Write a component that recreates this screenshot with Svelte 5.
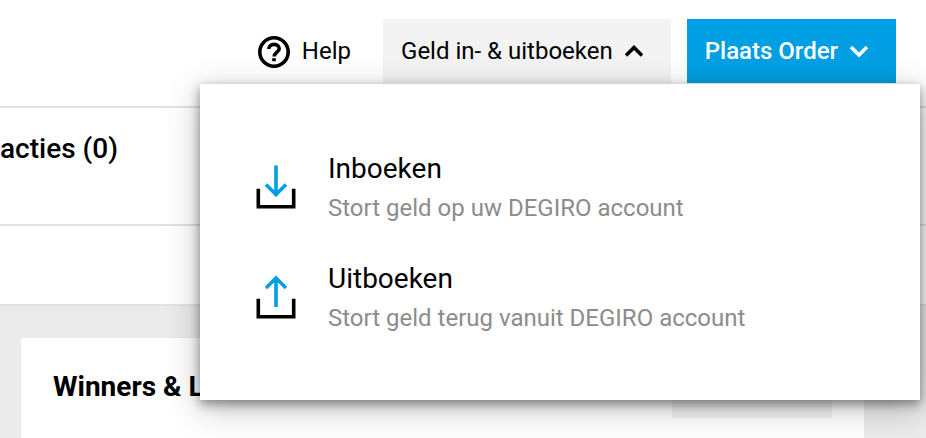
<script>
  let menuOpen = $state(true);

  const options = [
    {
      title: "Inboeken",
      text: "Stort geld op uw DEGIRO account",
      arrow: "M20 0.5V31M10 19.5L20 29.5L30 19.5",
    },
    {
      title: "Uitboeken",
      text: "Stort geld terug vanuit DEGIRO account",
      arrow: "M20 32V3M10 13L20 3L30 13",
    },
  ];

  function toggleMenu() {
    menuOpen = !menuOpen;
  }
</script>

<div class="page">
  <header>
    <div class="actions">
      <a class="help" href="#help">
        <svg width="32" height="34" viewBox="0 -2 32 34" aria-hidden="true">
          <circle cx="16" cy="16" r="14.2" />
          <path
            d="M10.8 13C10.8 10 13 8.4 16 8.4S21.2 10.2 21.2 12.8C21.2 16 16.2 16.6 16.2 20.6"
          />
          <path d="M16 22.2V25.2" />
        </svg>
        Help
      </a>
      <button class="cash" aria-expanded={menuOpen} onclick={toggleMenu}>
        Geld in- &amp; uitboeken
        <svg width="18" height="12" viewBox="0 0 18 12" aria-hidden="true">
          <path d={menuOpen ? "M1 10.5L9 2.5L17 10.5" : "M1 2.5L9 10.5L17 2.5"} />
        </svg>
      </button>
      <button class="order">
        Plaats Order
        <svg width="18" height="12" viewBox="0 0 18 12" aria-hidden="true">
          <path d="M1 2L9 10L17 2" />
        </svg>
      </button>

      {#if menuOpen}
        <div class="menu">
          {#each options as option}
            <a class="option" href="#{option.title.toLowerCase()}">
              <svg width="40" height="44" viewBox="0 0 40 44" aria-hidden="true">
                <path class="tray" d="M2.3 23.7V41.8H37.7V23.7" />
                <path class="arrow" d={option.arrow} />
              </svg>
              <span class="label">
                <span class="title">{option.title}</span>
                <span class="text">{option.text}</span>
              </span>
            </a>
          {/each}
        </div>
      {/if}
    </div>
  </header>

  <nav>
    <a href="#transacties">acties (0)</a>
  </nav>

  <div class="toolbar"></div>

  <main>
    <section class="card">
      <h2>Winners &amp; Losers</h2>
      <div class="filter"></div>
    </section>
  </main>
</div>

<style>
  :global(body) {
    margin: 0;
    overflow: hidden;
  }

  .page {
    display: flex;
    flex-direction: column;
    min-height: 100vh;
    background: #fff;
    color: #000;
    font-family: Roboto, sans-serif;
  }

  header,
  nav,
  .toolbar {
    border-bottom: 2px solid #e1e1e1;
  }

  header {
    padding: 19px 30px 23px;
  }

  .actions {
    position: relative;
    display: flex;
    justify-content: flex-end;
    gap: 16px;
  }

  a {
    color: inherit;
    text-decoration: none;
  }

  button,
  .help {
    display: flex;
    align-items: center;
    gap: 12px;
    height: 64px;
    font-family: inherit;
    font-size: 24px;
    line-height: 32px;
    white-space: nowrap;
  }

  .help {
    padding-right: 16px;
  }

  button {
    padding: 0 28px 0 18px;
    border: none;
    color: #000;
    cursor: pointer;
  }

  svg {
    flex: none;
    fill: none;
    stroke: currentColor;
    stroke-width: 3.6;
  }

  .cash {
    background: #f3f3f3;
  }

  .order {
    background: #009fe3;
    color: #fff;
    font-weight: 500;
  }

  .menu {
    position: absolute;
    z-index: 1;
    top: 65px;
    right: -24px;
    display: flex;
    flex-direction: column;
    gap: 32px;
    box-sizing: border-box;
    width: 720px;
    padding: 64px 56px;
    background: #fff;
    box-shadow:
      0 4px 10px rgba(0, 0, 0, 0.4),
      0 8px 32px rgba(0, 0, 0, 0.25);
  }

  .option {
    display: flex;
    align-items: center;
    gap: 32px;
  }

  .label {
    display: flex;
    flex-direction: column;
  }

  .title {
    font-size: 28px;
    line-height: 42px;
  }

  .text {
    color: #8c8c8c;
    font-size: 24px;
    line-height: 36px;
  }

  .arrow {
    stroke: #009fe3;
  }

  nav {
    padding: 20px 0 54px;
    font-size: 28px;
    font-weight: 500;
    line-height: 42px;
  }

  .toolbar {
    height: 78px;
  }

  main {
    flex: 1;
    padding: 32px 62px 0 21px;
    background: #ebebeb;
  }

  .card {
    display: flex;
    align-items: flex-start;
    justify-content: space-between;
    padding: 16px 32px 20px;
    background: #fff;
  }

  h2 {
    margin: 0;
    font-size: 28px;
    font-weight: 700;
    line-height: 66px;
  }

  .filter {
    width: 160px;
    height: 64px;
    background: #f3f3f3;
  }
</style>
